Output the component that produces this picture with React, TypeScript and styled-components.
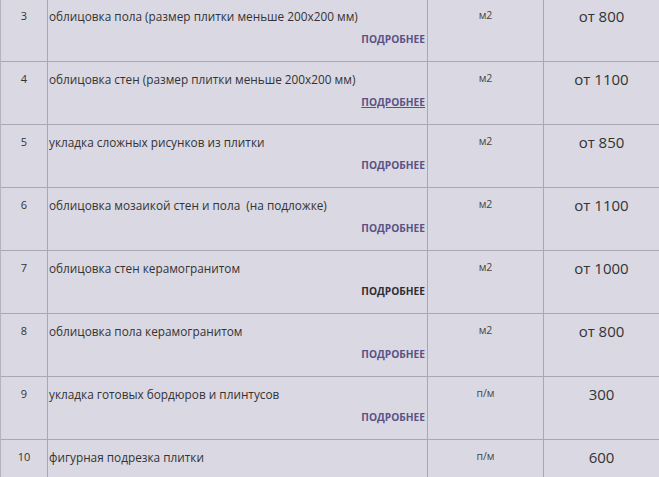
import React from 'react';
import styled, { createGlobalStyle } from 'styled-components';

interface IPriceRow {
  num: number;
  title: string;
  unit: string;
  price: string;
  linkState?: 'hover' | 'visited';
  noMore?: boolean;
}

const rows: IPriceRow[] = [
  { num: 3, title: 'облицовка пола (размер плитки меньше 200х200 мм)', unit: 'м2', price: 'от 800' },
  { num: 4, title: 'облицовка стен (размер плитки меньше 200х200 мм)', unit: 'м2', price: 'от 1100', linkState: 'hover' },
  { num: 5, title: 'укладка сложных рисунков из плитки', unit: 'м2', price: 'от 850' },
  { num: 6, title: 'облицовка мозаикой стен и пола  (на подложке)', unit: 'м2', price: 'от 1100' },
  { num: 7, title: 'облицовка стен керамогранитом', unit: 'м2', price: 'от 1000', linkState: 'visited' },
  { num: 8, title: 'облицовка пола керамогранитом', unit: 'м2', price: 'от 800' },
  { num: 9, title: 'укладка готовых бордюров и плинтусов', unit: 'п/м', price: '300' },
  { num: 10, title: 'фигурная подрезка плитки', unit: 'п/м', price: '600', noMore: true },
];

export default function App() {
  return (
    <>
      <GlobalStyle />
      <STable>
        {rows.map((row) => (
          <SRow key={row.num}>
            <SNum>{row.num}</SNum>
            <SDesc>
              <p>{row.title}</p>
              {!row.noMore && (
                <SMore href="#" state={row.linkState}>
                  ПОДРОБНЕЕ
                </SMore>
              )}
            </SDesc>
            <SUnit>{row.unit}</SUnit>
            <SPrice>{row.price}</SPrice>
          </SRow>
        ))}
      </STable>
    </>
  );
}

const GlobalStyle = createGlobalStyle`
  html, body {
    margin: 0;
    padding: 0;
    background: #dad9e3;
    overflow: hidden;
  }
  body {
    font-family: "Open Sans", "Liberation Sans", sans-serif;
    color: #333;
  }
`;

const STable = styled.div`
  margin-top: -2px;
  width: 662px;
  border-left: 1px solid #b4b3bd;
`;

const SRow = styled.div`
  display: grid;
  grid-template-columns: 47px 380px 116px 119px;
  height: 62px;
  border-top: 1px solid #a9a8b2;
`;

const SCell = styled.div`
  border-right: 1px solid #a9a8b2;
  box-sizing: border-box;
`;

const SNum = styled(SCell)`
  font-size: 11px;
  line-height: 16px;
  padding-top: 9px;
  text-align: center;
`;

const SDesc = styled(SCell)`
  display: flex;
  flex-direction: column;
  padding: 9px 2px 0 1px;
  > p {
    margin: 0;
    font-size: 11.8px;
    line-height: 16px;
    white-space: pre;
  }
`;

const SMore = styled.a<{ state?: 'hover' | 'visited' }>`
  align-self: flex-end;
  margin-top: 8px;
  font-size: 10.2px;
  line-height: 14px;
  font-weight: 700;
  color: ${({ state }) => (state === 'visited' ? '#2e2e33' : '#5a5285')};
  text-decoration: ${({ state }) => (state === 'hover' ? 'underline' : 'none')};
`;

const SUnit = styled(SCell)`
  font-size: 10.5px;
  line-height: 16px;
  padding-top: 8px;
  text-align: center;
  color: #444;
`;

const SPrice = styled(SCell)`
  font-size: 15px;
  line-height: 20px;
  padding-top: 7px;
  padding-right: 3px;
  text-align: center;
`;
